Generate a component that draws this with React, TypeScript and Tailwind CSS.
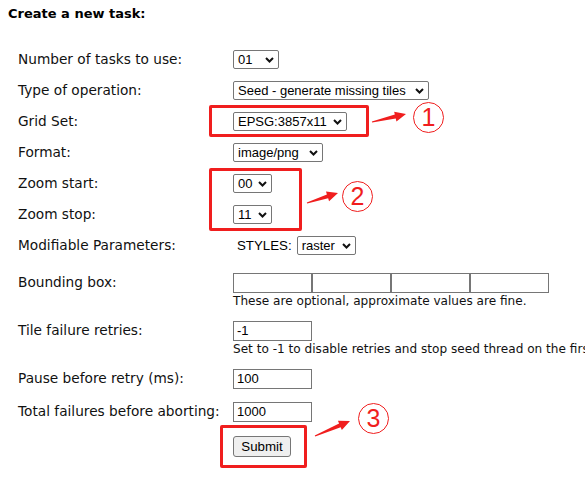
import React from 'react';

const labelFont = { fontFamily: '"DejaVu Sans", Verdana, sans-serif' };
const ctlFont = { fontFamily: '"Liberation Sans", Arial, sans-serif' };

function Chevron() {
  return (
    <svg width="9" height="6" viewBox="0 0 9 6" className="shrink-0">
      <polyline points="1,1 4.5,4.5 8,1" fill="none" stroke="#111" strokeWidth="2" />
    </svg>
  );
}

function Select({ value, w }: { value: string; w: string }) {
  return (
    <div
      className={`${w} h-[19px] flex items-center justify-between pl-[4px] pr-[4px] border border-[#767676] rounded-[2px] bg-white text-[13px] text-black leading-none`}
      style={ctlFont}
    >
      <span>{value}</span>
      <Chevron />
    </div>
  );
}

function TextBox({ value = '' }: { value?: string }) {
  return (
    <div
      className="w-[79px] h-[20px] flex items-center pl-[3px] border border-[#767676] bg-white text-[13px] text-black leading-none"
      style={ctlFont}
    >
      {value}
    </div>
  );
}

function Row({ label, children }: { label: string; children: React.ReactNode }) {
  return (
    <div className="flex items-center h-[22px]">
      <div className="w-[225px] shrink-0 pl-[10px] text-[13.7px] text-[#111] whitespace-nowrap" style={labelFont}>
        {label}
      </div>
      {children}
    </div>
  );
}

function BlockLabel({ children }: { children: React.ReactNode }) {
  return (
    <div
      className="w-[225px] shrink-0 pl-[10px] h-[20px] flex items-center text-[13.7px] text-[#111] whitespace-nowrap"
      style={labelFont}
    >
      {children}
    </div>
  );
}

function arrow(x1: number, y1: number, x2: number, y2: number) {
  const dx = x2 - x1;
  const dy = y2 - y1;
  const L = Math.hypot(dx, dy);
  const ux = dx / L;
  const uy = dy / L;
  const nx = -uy;
  const ny = ux;
  const hb = L - 11;
  const p = (d: number, o: number) => `${x1 + ux * d + nx * o},${y1 + uy * d + ny * o}`;
  return [p(0, 0.6), p(hb, 2), p(hb, 5), p(L, 0), p(hb, -5), p(hb, -2), p(0, -0.6)].join(' ');
}

function Circled({ n, x, y }: { n: string; x: string; y: string }) {
  return (
    <div
      className={`absolute ${x} ${y} w-[31px] h-[31px] rounded-full border-[1.5px] border-[#f01e1e] flex items-center justify-center text-[25px] text-[#f01e1e] leading-none`}
      style={ctlFont}
    >
      {n}
    </div>
  );
}

export default function App() {
  return (
    <div className="relative w-[585px] h-[481px] bg-white overflow-hidden">
      <div className="pt-[4px] pl-[8px] text-[13px] font-bold text-black" style={labelFont}>
        Create a new task:
      </div>

      {/* main form */}
      <div className="pl-[8px] mt-[25px] flex flex-col gap-[9px]">
        <Row label="Number of tasks to use:">
          <Select value="01" w="w-[46px]" />
        </Row>
        <Row label="Type of operation:">
          <Select value="Seed - generate missing tiles" w="w-[196px]" />
        </Row>
        <Row label="Grid Set:">
          <Select value="EPSG:3857x11" w="w-[114px]" />
        </Row>
        <Row label="Format:">
          <Select value="image/png" w="w-[90px]" />
        </Row>
        <Row label="Zoom start:">
          <Select value="00" w="w-[39px]" />
        </Row>
        <Row label="Zoom stop:">
          <Select value="11" w="w-[39px]" />
        </Row>
        <Row label="Modifiable Parameters:">
          <span className="ml-[4px] mr-[5px] text-[13.3px] text-black" style={ctlFont}>
            STYLES:
          </span>
          <Select value="raster" w="w-[59px]" />
        </Row>
      </div>

      {/* bounding box */}
      <div className="pl-[8px] mt-[16px] flex">
        <BlockLabel>Bounding box:</BlockLabel>
        <div>
          <div className="flex">
            <TextBox />
            <TextBox />
            <TextBox />
            <TextBox />
          </div>
          <div className="text-[12.1px] leading-[16px] text-[#111] whitespace-nowrap" style={labelFont}>
            These are optional, approximate values are fine.
          </div>
        </div>
      </div>

      <div className="pl-[8px] mt-[12px] flex">
        <BlockLabel>Tile failure retries:</BlockLabel>
        <div>
          <TextBox value="-1" />
          <div className="text-[12.1px] leading-[16px] text-[#111] whitespace-nowrap" style={labelFont}>
            Set to -1 to disable retries and stop seed thread on the first failure
          </div>
        </div>
      </div>

      <div className="pl-[8px] mt-[12px] flex">
        <BlockLabel>Pause before retry (ms):</BlockLabel>
        <TextBox value="100" />
      </div>

      <div className="pl-[8px] mt-[13px] flex">
        <BlockLabel>Total failures before aborting:</BlockLabel>
        <TextBox value="1000" />
      </div>

      <div className="pl-[233px] mt-[11px]">
        <button
          className="w-[58px] h-[21px] bg-[#efefef] border border-[#767676] rounded-[3px] text-[13.3px] text-black leading-none"
          style={ctlFont}
        >
          Submit
        </button>
      </div>

      {/* annotation overlays */}
      <div className="absolute left-[209px] top-[105px] w-[160px] h-[32px] border-[3px] border-[#f01e1e] rounded-[2px]" />
      <div className="absolute left-[209px] top-[168px] w-[93px] h-[63px] border-[3px] border-[#f01e1e] rounded-[2px]" />
      <div className="absolute left-[220px] top-[425px] w-[87px] h-[43px] border-[3px] border-[#f01e1e] rounded-[2px]" />

      <svg className="absolute left-0 top-0" width="585" height="481">
        <polygon points={arrow(372, 122, 406, 114)} fill="#f01e1e" />
        <polygon points={arrow(307, 203, 338, 193)} fill="#f01e1e" />
        <polygon points={arrow(315, 436, 350, 421)} fill="#f01e1e" />
      </svg>

      <Circled n="1" x="left-[413px]" y="top-[102px]" />
      <Circled n="2" x="left-[342px]" y="top-[181px]" />
      <Circled n="3" x="left-[358px]" y="top-[403px]" />
    </div>
  );
}
